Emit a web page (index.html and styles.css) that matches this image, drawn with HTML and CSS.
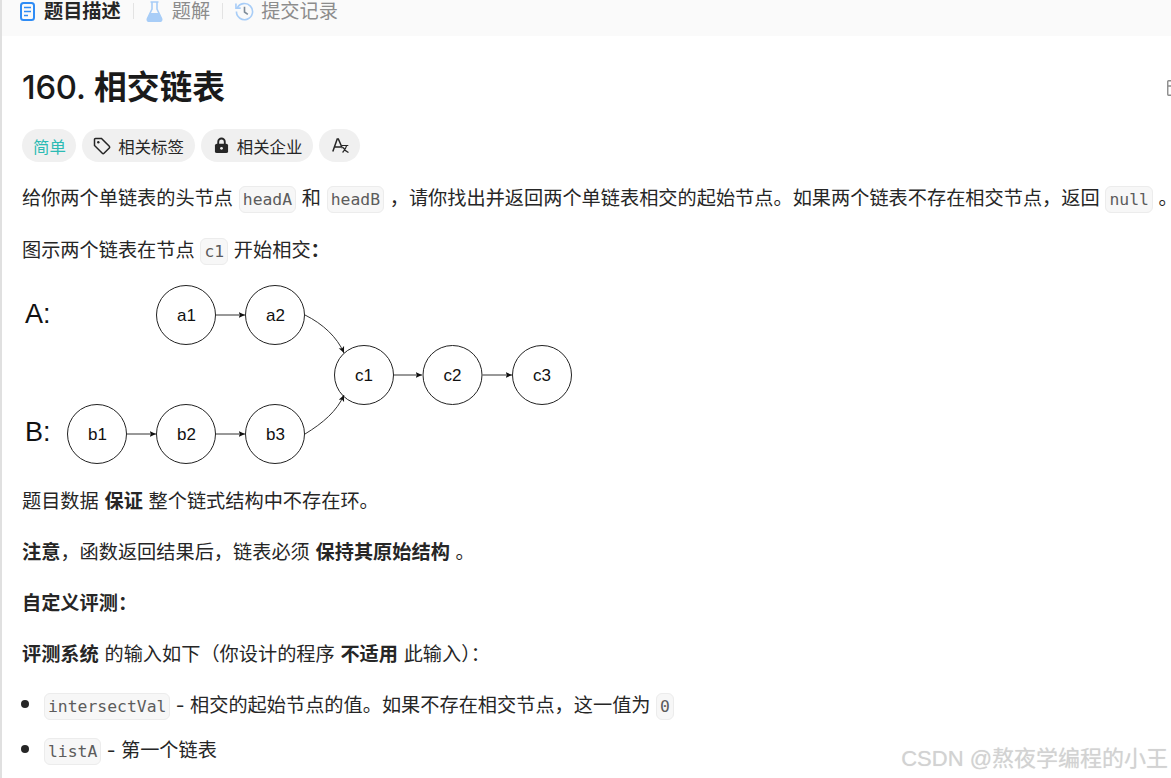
FILE: index.html
```html
<!DOCTYPE html>
<html lang="zh">
<head>
<meta charset="utf-8">
<title>160. 相交链表</title>
<link rel="stylesheet" href="styles.css">
</head>
<body>
<div class="page">
  <nav class="tabs">
    <div class="tab active">
      <svg class="tab-icon" viewBox="0 0 15 19" width="15" height="19"><rect x="1" y="1" width="13" height="17" rx="2.500" fill="none" stroke="#2f8cf5" stroke-width="2"/><path d="M4 5.500h7M4 9.500h7M4 13.500h4" stroke="#2f8cf5" stroke-width="1.700" fill="none"/></svg>
      <span>题目描述</span>
    </div>
    <span class="sep"></span>
    <div class="tab tab-flask">
      <svg class="tab-icon" viewBox="0 0 17 21" width="17" height="21"><path d="M4.500 1h8M6 1.500v6.500L1.500 17.500c-.6 1.600.2 3 2 3h10c1.800 0 2.600-1.400 2-3L11 8V1.500" fill="none" stroke="#a8cdf7" stroke-width="1.600"/><path d="M4 12h9l3 6c.2 1.500-.7 2.800-2.500 2.800h-10C1.700 20.800.800 19.500 1 18z" fill="#a8cdf7"/></svg>
      <span>题解</span>
    </div>
    <span class="sep"></span>
    <div class="tab">
      <svg class="tab-icon" viewBox="0 0 20 20" width="19" height="19"><path d="M2.300 6.500A8.500 8.500 0 1 1 1.500 10" fill="none" stroke="#a8cdf7" stroke-width="1.700"/><path d="M1 1.500v5h5" fill="none" stroke="#a8cdf7" stroke-width="1.700"/><path d="M10 5v5.500l3.500 2.500" fill="none" stroke="#7f8c99" stroke-width="1.700"/></svg>
      <span>提交记录</span>
    </div>
  </nav>

  <main class="content">
    <div class="title-row">
      <h1 class="title"><span class="num">160. </span>相交链表</h1>
      <svg class="cut-icon" viewBox="0 0 4 16" width="4" height="16"><path d="M4 .750H1.500a.750.750 0 0 0-.750.750v13a.750.750 0 0 0 .750.750H4M1 6h3" fill="none" stroke="#8c8c8c" stroke-width="1.400"/></svg>
    </div>

    <div class="pills">
      <span class="pill easy">简单</span>
      <span class="pill">
        <svg viewBox="0 0 18 18" width="18" height="18"><path d="M1.500 2.500a1 1 0 0 1 1-1h6l7.800 7.800a1.200 1.200 0 0 1 0 1.700l-5.300 5.300a1.200 1.200 0 0 1-1.700 0L1.500 8.500z" fill="none" stroke="#262626" stroke-width="1.500"/><circle cx="5.300" cy="5.300" r="1.200" fill="#262626"/></svg>
        相关标签
      </span>
      <span class="pill pill-lock">
        <svg viewBox="0 0 16 18" width="15" height="17"><path d="M4.500 8V5a3.500 3.500 0 0 1 7 0v3" fill="none" stroke="#262626" stroke-width="2"/><rect x="1" y="7" width="14" height="10" rx="2" fill="#262626"/><circle cx="8" cy="12" r="1.500" fill="#f0f0f0"/></svg>
        相关企业
      </span>
      <span class="pill icon-only">
        <svg viewBox="0 0 18 16" width="17" height="15"><path d="M.800 14.500L5.500 1h1.200L11 11M2.500 9.500h7" fill="none" stroke="#262626" stroke-width="1.600"/><path d="M10.500 8h6.800M15.500 8c-.4 2.500-1.800 4.800-4.300 7.500M11.800 10c1.100 2.300 3 4.200 5.700 5.500" fill="none" stroke="#262626" stroke-width="1.300"/></svg>
      </span>
    </div>

    <p class="line">给你两个单链表的头节点 <code>headA</code> 和 <code>headB</code> ，请你找出并返回两个单链表相交的起始节点。如果两个链表不存在相交节点，返回 <code>null</code> <span class="tail">。</span></p>
    <p class="line second">图示两个链表在节点 <code>c1</code> 开始相交<strong>：</strong></p>

    <svg class="diagram" viewBox="0 0 560 190" width="560" height="190">
      <defs>
        <marker id="arrow" markerWidth="7" markerHeight="7" refX="6.500" refY="3.500" orient="auto"><path d="M0 .6L6.500 3.500L0 6.400L1.500 3.500z" fill="#111"/></marker>
      </defs>
      <g class="labels">
        <text x="3" y="38">A:</text>
        <text x="3" y="156">B:</text>
      </g>
      <g class="nodes">
        <circle cx="164" cy="30" r="29.500"/><circle cx="253" cy="30" r="29.500"/>
        <circle cx="342" cy="90" r="29.500"/><circle cx="430.500" cy="90" r="29.500"/><circle cx="520" cy="90" r="29.500"/>
        <circle cx="75" cy="149" r="29.500"/><circle cx="164" cy="149" r="29.500"/><circle cx="253" cy="149" r="29.500"/>
      </g>
      <g class="edges">
        <path d="M194 30H223" marker-end="url(#arrow)"/>
        <path d="M283 30C301 39 315 52 322 68" marker-end="url(#arrow)"/>
        <path d="M372 90H400" marker-end="url(#arrow)"/>
        <path d="M460.500 90H490" marker-end="url(#arrow)"/>
        <path d="M105 149H134" marker-end="url(#arrow)"/>
        <path d="M194 149H223" marker-end="url(#arrow)"/>
        <path d="M283 149C301 138 315 126 322 110" marker-end="url(#arrow)"/>
      </g>
      <g class="node-text">
        <text x="164.500" y="36">a1</text><text x="253.500" y="36">a2</text>
        <text x="342" y="96">c1</text><text x="430.500" y="96">c2</text><text x="520" y="96">c3</text>
        <text x="75.500" y="155">b1</text><text x="164.500" y="155">b2</text><text x="253.500" y="155">b3</text>
      </g>
    </svg>

    <p class="line">题目数据 <strong>保证</strong> 整个链式结构中不存在环。</p>
    <p class="line"><strong>注意</strong>，函数返回结果后，链表必须 <strong>保持其原始结构</strong> 。</p>
    <p class="line"><strong>自定义评测：</strong></p>
    <p class="line"><strong>评测系统</strong> 的输入如下（你设计的程序 <strong>不适用</strong> 此输入）：</p>
    <ul class="list">
      <li><code>intersectVal</code> - 相交的起始节点的值。如果不存在相交节点，这一值为 <code>0</code></li>
      <li><code>listA</code> - 第一个链表</li>
    </ul>
  </main>
  <div class="watermark">CSDN @熬夜学编程的小王</div>
</div>
</body>
</html>
```
FILE: styles.css
```css
* { box-sizing: border-box; }
html, body { margin: 0; padding: 0; height: 100%; overflow: hidden; background: #fff; }
body {
  font-family: Inter, "Noto Sans CJK SC", sans-serif;
  color: #262626;
}
.page {
  position: relative;
  height: 778px;
  border-left: 2px solid #e0e0e0;
  overflow: hidden;
}
.tabs {
  display: flex;
  align-items: center;
  height: 36px;
  padding: 0 0 14px 18px;
  background: #fafafa;
  font-size: 19.2px;
  color: #8c8c8c;
}
.tab { display: flex; align-items: center; gap: 7px; line-height: 22px; }
.tab.active { color: #262626; font-weight: 700; gap: 9px; }
.tab-flask { gap: 9px; }
.sep { width: 1px; height: 16px; background: #e3e3e3; margin: 0 12px; }
.tab-icon { flex: none; }
.content { padding: 0 0 0 20px; width: 1169px; }
.title-row { display: flex; justify-content: space-between; align-items: center; height: 41px; margin-top: 31px; }
.title { margin: 0; font-size: 32.8px; font-weight: 700; line-height: 41px; color: #1a1a1a; }
.num { font-weight: 500; letter-spacing: -0.2px; }
.cut-icon { flex: none; }
.pills { display: flex; gap: 6px; margin-top: 21px; margin-bottom: 22px; }
.pill {
  display: inline-flex;
  align-items: center;
  gap: 7px;
  height: 33px;
  padding: 0 11px;
  border-radius: 17px;
  background: #f0f0f0;
  font-size: 16.4px;
  color: #262626;
}
.pill.easy { color: #2cbbb4; padding: 0 10.500px 0 11px; }
.pill.pill-lock { padding-left: 13px; gap: 8px; }
.pill.icon-only { padding: 0 11px 0 13px; }
.line {
  margin: 0 0 23px;
  font-size: 19.2px;
  line-height: 28px;
  word-spacing: 0.3px;
  white-space: nowrap;
}
.line.second { margin-bottom: 20px; }
.tail { letter-spacing: -8px; }
strong { font-weight: 700; color: #262626; }
code {
  display: inline-block;
  font-family: "DejaVu Sans Mono", monospace;
  font-size: 16.4px;
  line-height: 25px;
  padding: 0 3px;
  color: #5c5c5c;
  background: #f7f7f7;
  border: 1px solid #ececec;
  border-radius: 6px;
}
.diagram { display: block; margin: 0 0 12px 0; }
.nodes circle { fill: #fff; stroke: #222; stroke-width: 1; }
.edges path { fill: none; stroke: #333; stroke-width: 1; }
.node-text text { font-family: "Liberation Sans", sans-serif; font-size: 17px; text-anchor: middle; fill: #111; }
.labels text { font-family: "Liberation Sans", sans-serif; font-size: 27px; fill: #111; }
.list { margin: -2px 0 0; padding: 0 0 0 22px; font-size: 19.2px; line-height: 28px; }
.list li { margin-bottom: 14px; white-space: nowrap; }
.list li::marker { color: #262626; font-size: 25px; }
.watermark {
  position: absolute;
  right: 3px;
  bottom: 5px;
  font-family: "Liberation Sans", "Noto Sans CJK SC", sans-serif;
  font-size: 22px;
  line-height: 28px;
  color: #d2d2d2;
  text-shadow: 0 0 1px #e2e2e2;
}
```
